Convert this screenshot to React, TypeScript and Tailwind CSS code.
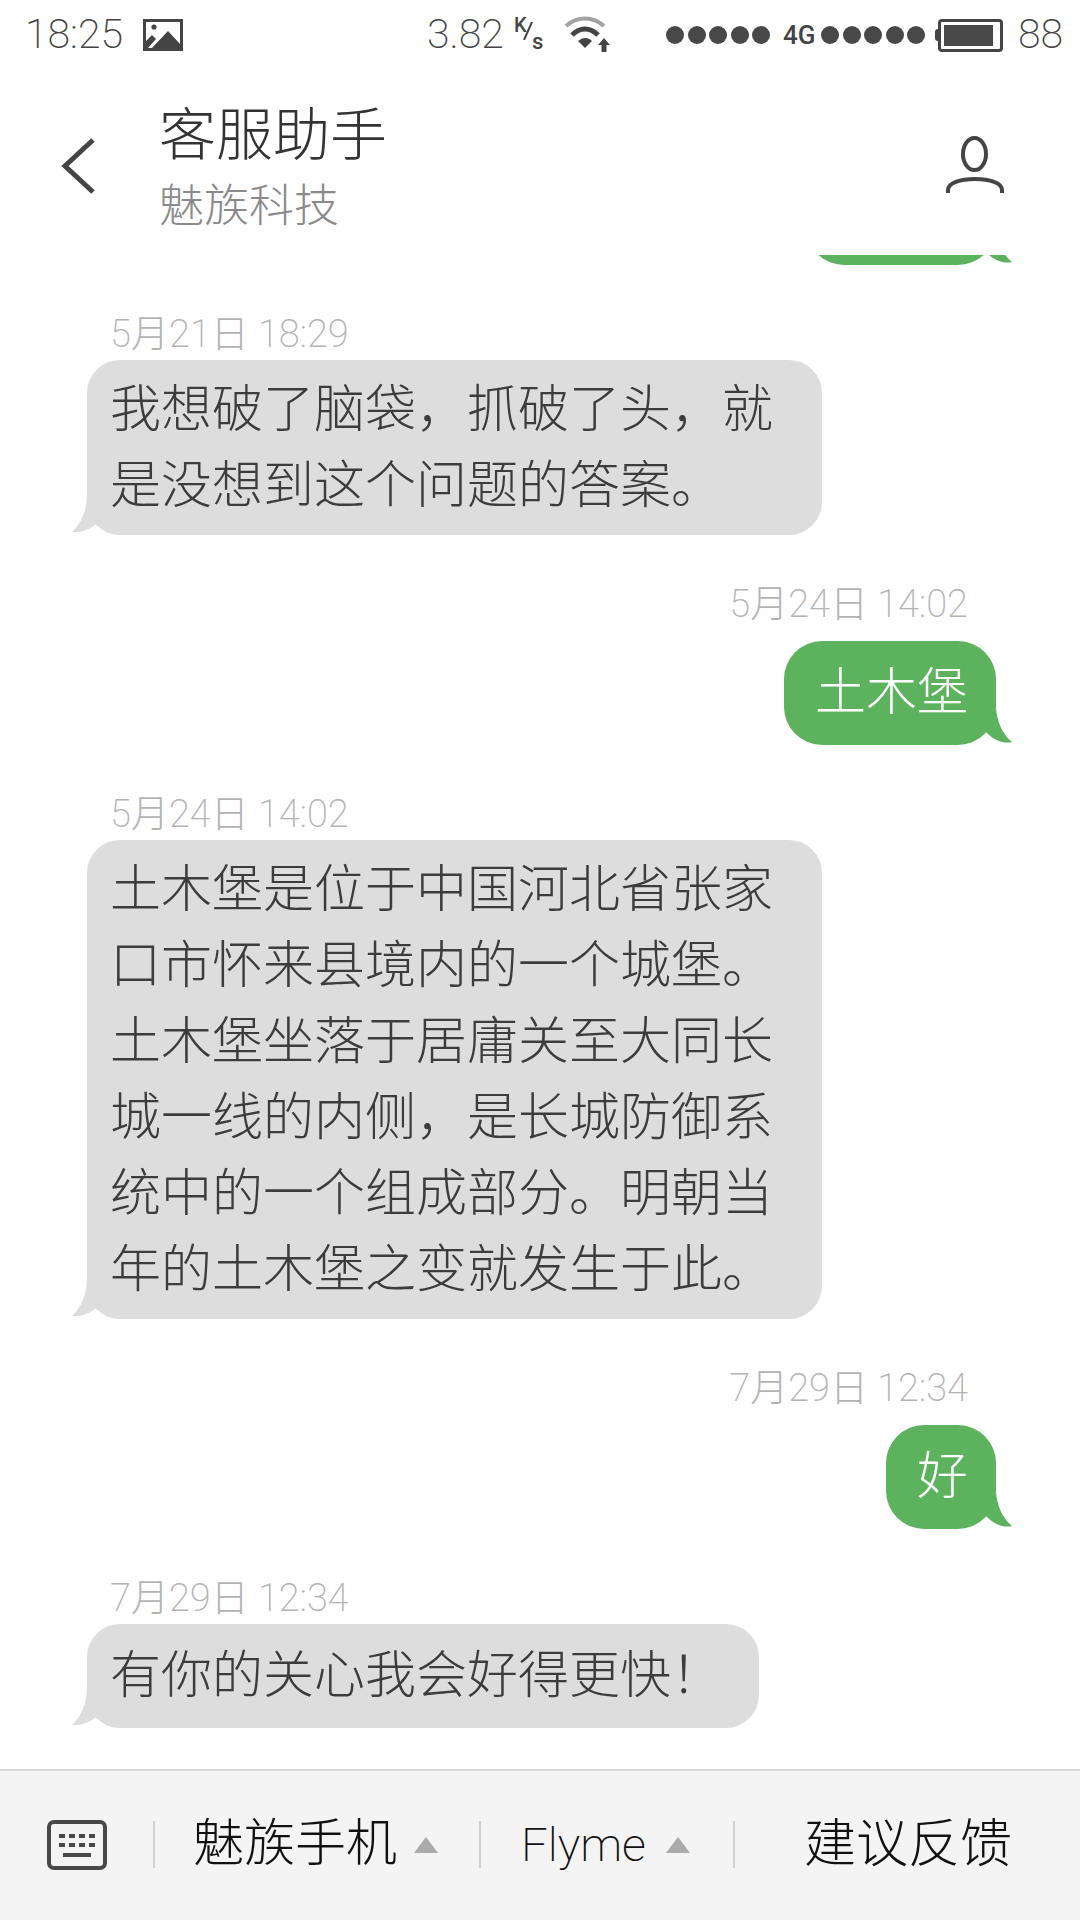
import React from "react";

const FONT = "font-['Roboto','Noto_Sans_CJK_SC',sans-serif]";

interface Message {
  time?: string;
  text?: string;
  mine?: boolean;
}

const messages: Message[] = [
  { mine: true },
  { time: "5月21日 18:29", text: "我想破了脑袋，抓破了头，就是没想到这个问题的答案。" },
  { time: "5月24日 14:02", text: "土木堡", mine: true },
  {
    time: "5月24日 14:02",
    text: "土木堡是位于中国河北省张家口市怀来县境内的一个城堡。土木堡坐落于居庸关至大同长城一线的内侧，是长城防御系统中的一个组成部分。明朝当年的土木堡之变就发生于此。",
  },
  { time: "7月29日 12:34", text: "好", mine: true },
  { time: "7月29日 12:34", text: "有你的关心我会好得更快！" },
];

const Tail = ({ mine }: { mine?: boolean }) =>
  mine ? (
    <svg className="absolute right-[-16px] bottom-[1px] w-[30px] h-[36px]" viewBox="0 0 30 36">
      <path d="M14 0 C15 14 21 27 30 34 C23 36 12 33 4 24 Z" fill="#5cb25d" />
    </svg>
  ) : (
    <svg className="absolute left-[-15px] bottom-[1px] w-[30px] h-[40px]" viewBox="0 0 30 40">
      <path d="M15 0 C15 16 9 30 0 38 C9 39 20 35 27 27 Z" fill="#dcdddc" />
    </svg>
  );

const Bubble = ({ message }: { message: Message }) => {
  if (message.mine) {
    return (
      <div className="flex flex-col items-end pr-[84px]">
        {message.time && (
          <div className="h-[52px] mb-[11px] mr-[28px] text-[38px] leading-[52px] font-extralight text-[#b4b4b4]">
            {message.time}
          </div>
        )}
        <div
          className={`relative flex items-center min-h-[104px] rounded-[38px] bg-[#5cb25d] pl-[31px] pr-[28px] text-[51px] leading-[76px] font-extralight text-white ${
            message.text ? "" : "w-[190px]"
          }`}
        >
          {message.text}
          <Tail mine />
        </div>
      </div>
    );
  }
  return (
    <div className="flex flex-col items-start pl-[87px]">
      <div className="h-[52px] pl-[23px] text-[38px] leading-[52px] font-extralight text-[#b4b4b4]">
        {message.time}
      </div>
      <div className="relative flex items-center min-h-[104px] max-w-[735px] rounded-[33px] bg-[#dcdddc] pl-[23px] pr-[37px] py-[11.5px] text-[51px] leading-[76px] font-extralight text-[#3c3c3c]">
        {message.text}
        <Tail />
      </div>
    </div>
  );
};

const Dots = () => (
  <div className="flex gap-[3.5px]">
    {[0, 1, 2, 3, 4].map((i) => (
      <span key={i} className="w-[18px] h-[18px] rounded-full bg-[#484848]" />
    ))}
  </div>
);

const StatusBar = () => (
  <div className="flex h-[70px] shrink-0 items-center pl-[25px] text-[#444]">
    <span className="w-[118px] text-[41px] font-extralight">18:25</span>
    <svg className="w-[40px] h-[32px]" viewBox="0 0 40 32">
      <path fill="#444" fillRule="evenodd" d="M0 0H40V32H0Z M3 3V22L9 16L13 20L5 29H9L25 12L37 25V3Z" />
      <circle cx="11" cy="8" r="2.6" fill="#444" />
    </svg>
    <span className="ml-[244px] w-[87px] text-[41px] font-extralight">3.82</span>
    <span className="relative w-[49px] h-[40px] text-[20px] font-medium leading-none">
      <span className="absolute left-[0px] top-[0px]">K</span>
      <svg className="absolute left-[9px] top-[7px] w-[10px] h-[18px]" viewBox="0 0 10 18">
        <path d="M9 0 L1 18" stroke="#444" strokeWidth="2" />
      </svg>
      <span className="absolute left-[18px] top-[16px] text-[22px]">s</span>
    </span>
    <svg className="w-[48px] h-[40px]" viewBox="0 0 48 40">
      <path d="M3 11 C14 1 30 1 41 11" fill="none" stroke="#a3a3a3" strokeWidth="4" />
      <path d="M9 20 C17 12 27 12 35 20" fill="none" stroke="#444" strokeWidth="5" />
      <path d="M15 26 C20 22 25 22 29 26 L22 33 Z" fill="#444" />
      <path d="M41 23 L47 30 H43.5 V37 H38.5 V30 H35 Z" fill="#444" />
    </svg>
    <div className="ml-[55px]"><Dots /></div>
    <span className="ml-[13px] w-[38px] text-[26px] font-medium">4G</span>
    <Dots />
    <div className="ml-[10px] w-[3px] h-[12px] rounded-l-sm bg-[#444]" />
    <div className="w-[65px] h-[33px] rounded-[4px] border-[3px] border-[#444] p-[3px] pr-[2px]">
      <div className="h-full w-[49px] bg-[#484848]" />
    </div>
    <span className="ml-[15px] text-[41px] font-extralight">88</span>
  </div>
);

const Header = () => (
  <div className="flex h-[185px] shrink-0 bg-white pl-[60px]">
    <svg className="mt-[67px] w-[36px] h-[58px]" viewBox="0 0 36 58">
      <path d="M33 3 L5 29 L33 55" fill="none" stroke="#444" strokeWidth="5" />
    </svg>
    <div className="ml-[63px] pt-[31px]">
      <div className="mb-[10px] text-[57px] leading-[70px] font-extralight text-[#333]">客服助手</div>
      <div className="text-[45px] leading-[52px] font-extralight text-[#8a8a8a]">魅族科技</div>
    </div>
    <svg className="ml-auto mr-[76px] mt-[66px] w-[58px] h-[58px]" viewBox="0 0 58 58">
      <ellipse cx="28.5" cy="18" rx="11.5" ry="16" fill="none" stroke="#444" strokeWidth="4" />
      <path d="M2 57 V54 C2 47 14 43 29 43 C44 43 56 47 56 54 V57" fill="none" stroke="#444" strokeWidth="4" />
    </svg>
  </div>
);

const Triangle = () => <div className="w-0 h-0 border-x-[12.5px] border-x-transparent border-b-[16px] border-b-[#ababab]" />;
const Separator = () => <div className="w-[2px] h-[47px] bg-[#d0d0d0]" />;

const Footer = () => (
  <div className="flex h-[151px] shrink-0 items-center border-t-2 border-[#d6d6d6] bg-[#f4f4f4] pb-[2px] text-[51px] font-extralight text-[#111]">
    <svg className="ml-[47px] w-[60px] h-[50px]" viewBox="0 0 60 50">
      <rect x="2" y="2" width="56" height="46" rx="5" fill="none" stroke="#484848" strokeWidth="4" />
      <path fill="#484848" d="M12 14h6v4h-6zM22 14h6v4h-6zM32 14h6v4h-6zM42 14h6v4h-6zM12 23h6v4h-6zM22 23h6v4h-6zM32 23h6v4h-6zM42 23h6v4h-6zM16 33h28v4H16z" />
    </svg>
    <div className="ml-[46px]"><Separator /></div>
    <span className="ml-[38px] w-[221px]">魅族手机</span>
    <Triangle />
    <div className="ml-[41px]"><Separator /></div>
    <span className="ml-[40px] w-[145px] pt-[2px] text-[47px]">Flyme</span>
    <Triangle />
    <div className="ml-[43px]"><Separator /></div>
    <span className="ml-[69px] text-[52px]">建议反馈</span>
  </div>
);

export default function App() {
  return (
    <div className={`flex h-[1920px] w-[1080px] flex-col overflow-hidden bg-white ${FONT}`}>
      <StatusBar />
      <Header />
      <div className="flex min-h-0 flex-1 flex-col justify-end gap-[43px] overflow-hidden pb-[41px]">
        {messages.map((message, i) => (
          <Bubble key={i} message={message} />
        ))}
      </div>
      <Footer />
    </div>
  );
}
